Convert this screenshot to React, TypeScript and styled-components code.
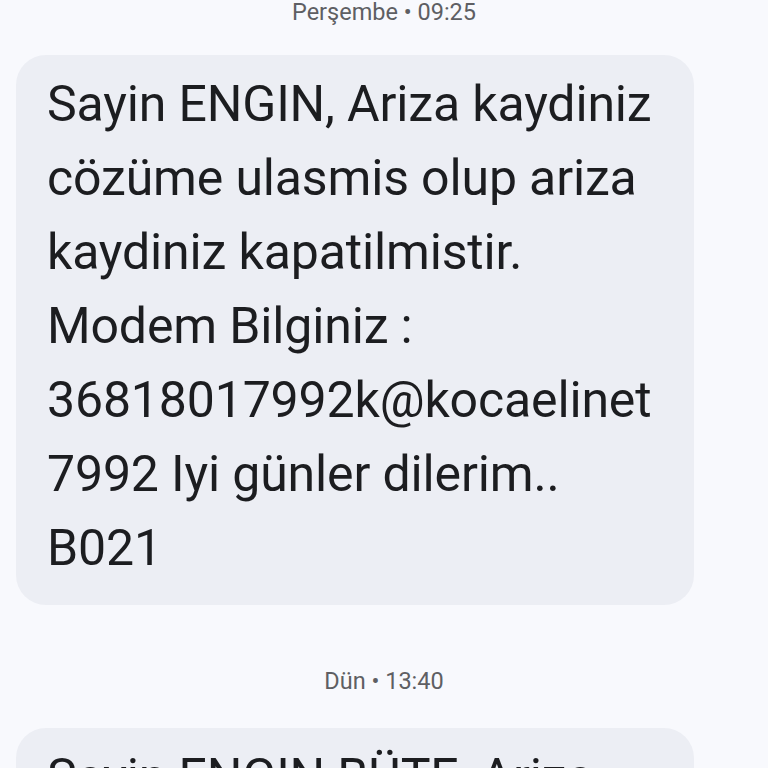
import styled, { createGlobalStyle } from "styled-components";

const GlobalStyle = createGlobalStyle`
  html, body {
    margin: 0;
    padding: 0;
    background: #f8f9fd;
    overflow: hidden;
  }
  body {
    font-family: Roboto, "Liberation Sans", sans-serif;
    color: #1f1f1f;
  }
`;

const Thread = styled.div`
  display: flex;
  flex-direction: column;
  align-items: flex-start;
  width: 768px;
  height: 768px;
  overflow: hidden;
`;

const Stamp = styled.div<{ $top: number; $bottom: number }>`
  align-self: stretch;
  text-align: center;
  font-size: 23.5px;
  line-height: 24px;
  color: #5e5f63;
  margin-top: ${(p) => p.$top}px;
  margin-bottom: ${(p) => p.$bottom}px;
`;

const Bubble = styled.div`
  margin-left: 16px;
  width: 678px;
  box-sizing: border-box;
  padding: 12px 24px 20px 31px;
  background: #eceef4;
  border-radius: 30px;
  font-size: 50px;
  line-height: 74px;
  letter-spacing: -0.15px;
  color: #1c1d20;
`;

const Line = styled.div`
  white-space: nowrap;
`;

const first = [
  "Sayin ENGIN, Ariza kaydiniz",
  "cözüme ulasmis olup ariza",
  "kaydiniz kapatilmistir.",
  "Modem Bilginiz :",
  "36818017992k@kocaelinet",
  "7992 Iyi günler dilerim..",
  "B021",
];

export default function App() {
  return (
    <>
      <GlobalStyle />
      <Thread>
        <Stamp $top={0} $bottom={31}>Perşembe • 09:25</Stamp>
        <Bubble>
          {first.map((l) => (
            <Line key={l}>{l}</Line>
          ))}
        </Bubble>
        <Stamp $top={64} $bottom={35}>Dün • 13:40</Stamp>
        <Bubble>
          Sayin ENGIN BÜTE, Ariza kaydiniz cözüme ulasmis olup ariza kaydiniz
          kapatilmistir.
        </Bubble>
      </Thread>
    </>
  );
}
